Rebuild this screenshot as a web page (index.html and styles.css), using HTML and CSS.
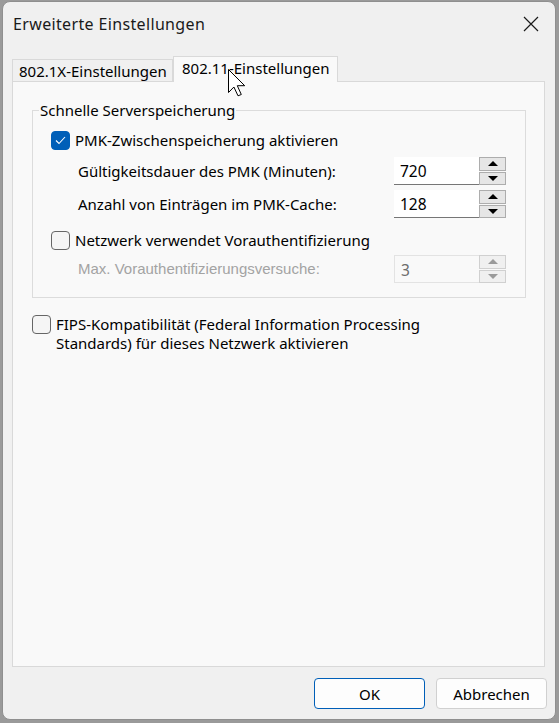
FILE: index.html
```html
<!DOCTYPE html>
<html lang="de">
<head>
<meta charset="utf-8">
<link rel="stylesheet" href="styles.css">
</head>
<body>
<div class="window">
  <div class="titlebar">
    <span class="title">Erweiterte Einstellungen</span>
    <svg class="close" width="16" height="16" viewBox="0 0 16 16"><path d="M1 1L15 15M15 1L1 15" stroke="#1a1a1a" stroke-width="1.2" fill="none"/></svg>
  </div>
  <div class="tabs">
    <div class="tab">802.1X-Einstellungen</div>
    <div class="tab active">802.11-Einstellungen</div>
  </div>
  <div class="panel">
    <fieldset class="group">
      <legend>Schnelle Serverspeicherung</legend>
      <div class="row check-row first">
        <span class="cb checked"><svg width="11" height="9" viewBox="0 0 11 9"><path d="M1 4.5L4 7.5L10 1" stroke="#fff" stroke-width="1.1" fill="none"/></svg></span>
        <span class="lbl">PMK-Zwischenspeicherung aktivieren</span>
      </div>
      <div class="row field-row r1">
        <span class="flbl">Gültigkeitsdauer des PMK (Minuten):</span>
        <div class="spin"><div class="spin-val">720</div><div class="spin-btns"><span class="sb"><i class="up"></i></span><span class="sb"><i class="down"></i></span></div></div>
      </div>
      <div class="row field-row r2">
        <span class="flbl">Anzahl von Einträgen im PMK-Cache:</span>
        <div class="spin"><div class="spin-val">128</div><div class="spin-btns"><span class="sb"><i class="up"></i></span><span class="sb"><i class="down"></i></span></div></div>
      </div>
      <div class="row check-row second">
        <span class="cb"></span>
        <span class="lbl">Netzwerk verwendet Vorauthentifizierung</span>
      </div>
      <div class="row field-row r3">
        <span class="flbl dis">Max. Vorauthentifizierungsversuche:</span>
        <div class="spin dis"><div class="spin-val">3</div><div class="spin-btns"><span class="sb"><i class="up"></i></span><span class="sb"><i class="down"></i></span></div></div>
      </div>
    </fieldset>
    <div class="fips">
      <span class="cb"></span>
      <span class="lbl">FIPS-Kompatibilität (Federal Information Processing<br>Standards) für dieses Netzwerk aktivieren</span>
    </div>
  </div>
  <div class="buttons">
    <button class="btn primary">OK</button>
    <button class="btn">Abbrechen</button>
  </div>
  <svg class="cursor" width="18" height="28" viewBox="0 0 18 28"><path d="M0.5 0.5L0.5 23.5L5.9 18L10 26.8L13.3 25.5L9.3 16.7L16.7 16.7Z" fill="#fff" stroke="#000" stroke-width="1" stroke-linejoin="miter"/></svg>
</div>
</body>
</html>
```
FILE: styles.css
```css
html, body { margin: 0; padding: 0; }
body {
  width: 559px; height: 723px; overflow: hidden;
  background: #9a9a9a;
  font-family: "Noto Sans", "Open Sans", sans-serif;
  font-size: 15px;
  line-height: 20px;
  color: #000;
  padding: 1px 0 0 2px;
  box-sizing: border-box;
}
.window {
  position: relative;
  width: 554px; height: 719px;
  background: #f0f0f0;
  border: 1px solid #8f8f8f;
  border-radius: 8px;
  box-sizing: border-box;
  display: flex; flex-direction: column;
  overflow: hidden;
}
.titlebar {
  height: 44px; flex: none;
  display: flex; align-items: center; justify-content: space-between;
  padding: 0 16px 0 10px;
}
.title { font-size: 16px; letter-spacing: 0.35px; color: #1a1a1a; }
.close { display: block; }
.tabs {
  display: flex; align-items: flex-end;
  height: 35px; padding-left: 9px; flex: none;
}
.tab {
  height: 22px; line-height: 22px;
  padding: 0 0 0 6px;
  border: 1px solid #d9d9d9; border-bottom: none;
  background: #f0f0f0;
  box-sizing: border-box;
  width: 161px;
  white-space: nowrap;
}
.tab.active {
  height: 26px; line-height: 22px;
  background: #f9f9f9; width: 165px;
  padding-left: 8px;
  margin-bottom: -1px; position: relative; z-index: 1;
}
.panel {
  margin: 0 10px 0 9px;
  height: 586px; flex: none;
  background: #f9f9f9;
  border: 1px solid #d9d9d9;
  box-sizing: border-box;
  padding: 18px 18px 0 19px;
}
.group {
  margin: 0; border: 1px solid #dcdcdc;
  padding: 0 0 14px 0;
}
.group legend { padding: 0 1px; margin-left: 6px; line-height: 20px; }
.row { display: flex; align-items: center; }
.check-row { height: 20px; padding-left: 18px; }
.check-row.first { margin-top: 10px; }
.check-row.second { margin-top: 12px; }
.cb {
  width: 19px; height: 19px; box-sizing: border-box;
  border: 1px solid #666; border-radius: 4px;
  background: #f5f5f5; flex: none;
  display: flex; align-items: center; justify-content: center;
}
.cb.checked { background: #005fb8; border-color: #005fb8; }
.lbl { margin-left: 5px; }
.field-row { justify-content: space-between; height: 28px; padding-left: 45px; padding-right: 19px; }
.r1 { margin-top: 7px; }
.r2 { margin-top: 5px; }
.r3 { margin-top: 5px; }
.flbl.dis { color: #a3a3a3; font-family: "Liberation Sans", Arial, sans-serif; font-size: 15px; }
.spin { display: flex; width: 112px; height: 28px; }
.spin-val {
  flex: 1; background: #fff; border-bottom: 1px solid #767676;
  padding-left: 6px; line-height: 28px; font-size: 15.5px;
}
.spin-btns { width: 27px; display: flex; flex-direction: column; gap: 1px; }
.sb {
  flex: 1; background: #e6e6e6; border: 1px solid #adadad;
  display: flex; align-items: center; justify-content: center;
}
.sb i { width: 0; height: 0; border-left: 5px solid transparent; border-right: 5px solid transparent; }
.sb i.up { border-bottom: 5px solid #000; }
.sb i.down { border-top: 5px solid #000; }
.spin.dis .spin-val { background: #f9f9f9; border: 1px solid #e3e3e3; border-right: none; color: #6d6d6d; }
.spin.dis .sb { background: #f0f0f0; border-color: #d0d0d0; }
.spin.dis .sb i.up { border-bottom-color: #9a9a9a; }
.spin.dis .sb i.down { border-top-color: #9a9a9a; }
.fips { display: flex; align-items: flex-start; margin-top: 17px; }
.fips .lbl { line-height: 19px; margin-left: 5px; }
.buttons {
  flex: 1; display: flex; justify-content: flex-end; align-items: flex-start;
  padding: 11px 8px 0 0; gap: 11px;
}
.btn {
  width: 111px; height: 31px;
  font-family: inherit; font-size: 15px;
  background: #fdfdfd; border: 1px solid #d0d0d0; border-radius: 4px;
  color: #000;
}
.btn.primary { border-color: #005fb8; }
.cursor { position: absolute; left: 225px; top: 67px; z-index: 5; }
```
